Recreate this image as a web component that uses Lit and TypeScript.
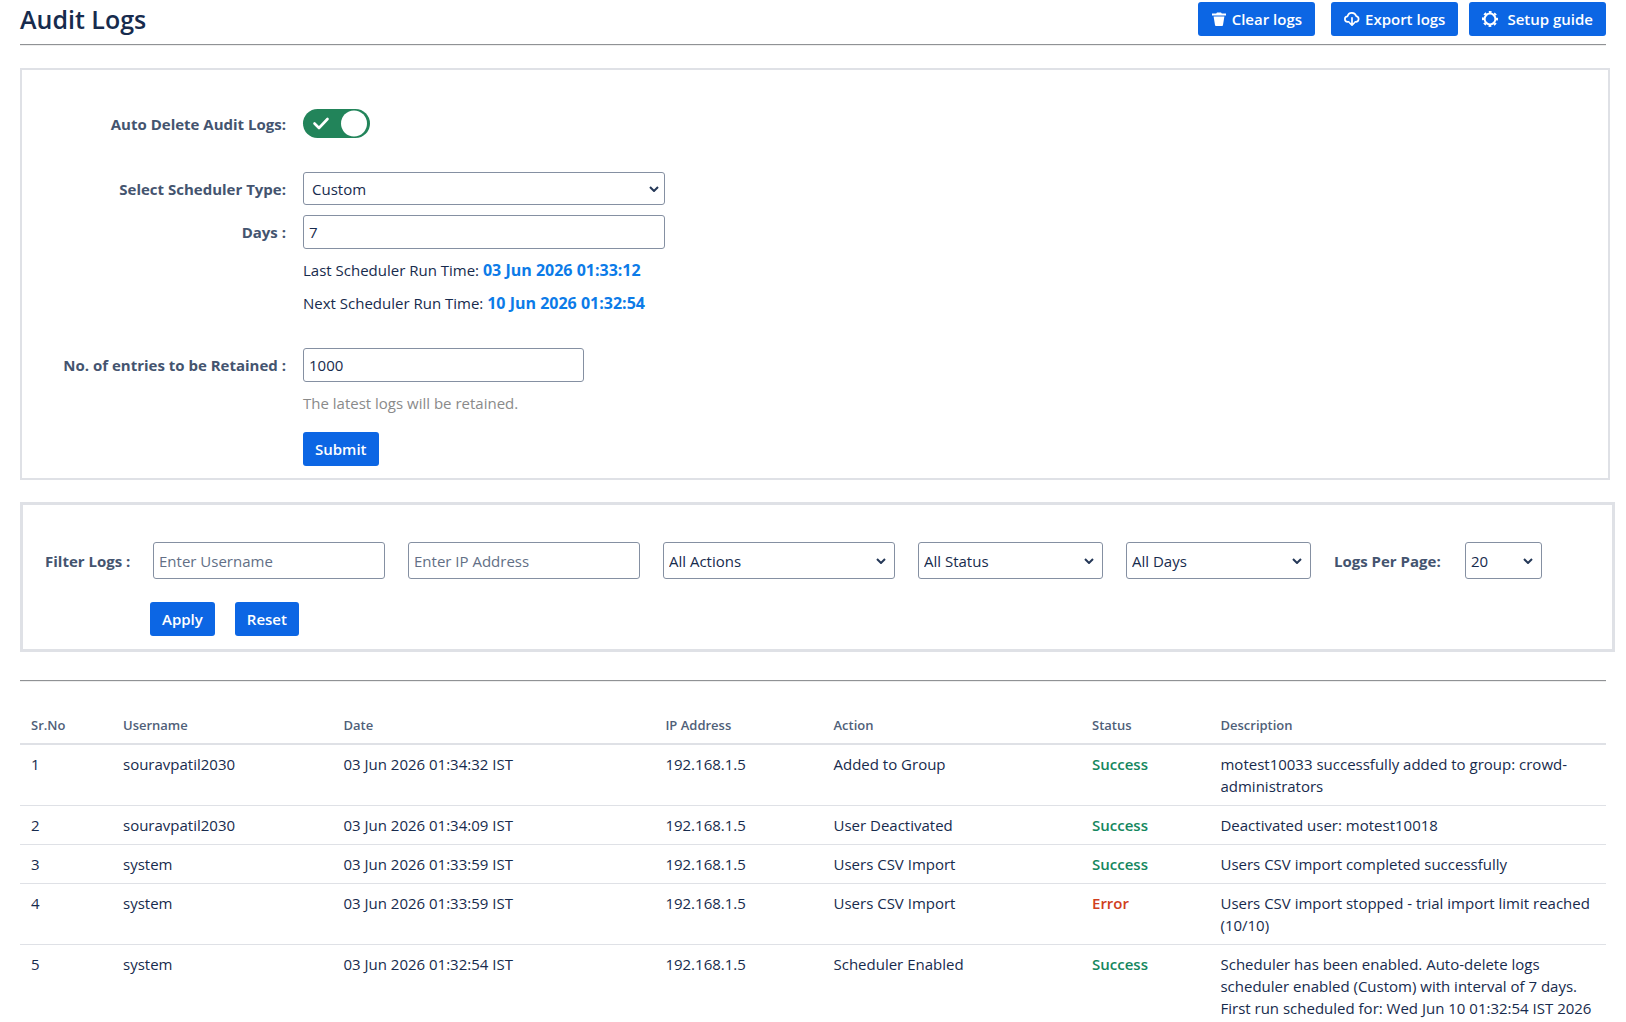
import { LitElement, html, css, svg } from "lit";
import { customElement, property } from "lit/decorators.js";

interface LogEntry {
  user: string;
  date: string;
  ip: string;
  action: string;
  status: "Success" | "Error";
  description: string;
}

const LOGS: LogEntry[] = [
  { user: "souravpatil2030", date: "03 Jun 2026 01:34:32 IST", ip: "192.168.1.5", action: "Added to Group", status: "Success", description: "motest10033 successfully added to group: crowd-administrators" },
  { user: "souravpatil2030", date: "03 Jun 2026 01:34:09 IST", ip: "192.168.1.5", action: "User Deactivated", status: "Success", description: "Deactivated user: motest10018" },
  { user: "system", date: "03 Jun 2026 01:33:59 IST", ip: "192.168.1.5", action: "Users CSV Import", status: "Success", description: "Users CSV import completed successfully" },
  { user: "system", date: "03 Jun 2026 01:33:59 IST", ip: "192.168.1.5", action: "Users CSV Import", status: "Error", description: "Users CSV import stopped - trial import limit reached (10/10)" },
  { user: "system", date: "03 Jun 2026 01:32:54 IST", ip: "192.168.1.5", action: "Scheduler Enabled", status: "Success", description: "Scheduler has been enabled. Auto-delete logs scheduler enabled (Custom) with interval of 7 days. First run scheduled for: Wed Jun 10 01:32:54 IST 2026" },
];

const trashIcon = svg`<path fill="currentColor" d="M6 1.500h4l.8.900H15v2.200H1V2.400h4.200zM2.600 5.400h10.800L12 14c-.1.700-.6 1-1.200 1H5.200c-.6 0-1.100-.3-1.200-1z"/>`;
const cloudIcon = svg`<path fill="none" stroke="currentColor" stroke-width="1.700" stroke-linecap="round" stroke-linejoin="round" d="M4.800 10.800H3.700a2.700 2.700 0 0 1-.2-5.400A4.500 4.500 0 0 1 12.200 5.100a2.900 2.900 0 0 1 .1 5.700h-1.100M8 6.800v7M5.800 12l2.200 2.200 2.200-2.200"/>`;
const gearIcon = svg`<circle cx="8" cy="8" r="5.400" fill="none" stroke="currentColor" stroke-width="2"/>
  <circle cx="8" cy="8" r="7" fill="none" stroke="currentColor" stroke-width="2" stroke-dasharray="2.749 2.749" stroke-dashoffset="1.374"/>`;

@customElement("log-table")
export class LogTable extends LitElement {
  @property({ attribute: false }) logs: LogEntry[] = [];

  static styles = css`
    :host { display: block; }
    .table { width: 100%; border-collapse: collapse; table-layout: fixed; }
    .head, .cell { padding: 8px 0 8px 11px; text-align: left; vertical-align: top; }
    .head { font-size: 13px; line-height: 20px; font-weight: 600; color: #505f79; border-bottom: 2px solid #dfe1e6; }
    .cell { line-height: 22px; border-bottom: 1px solid #dfe1e6; }
    .wide { padding-right: 11px; }
    .c-no { width: 5.8%; }
    .c-user { width: 13.9%; }
    .c-date { width: 20.3%; }
    .c-ip { width: 10.6%; }
    .c-action { width: 16.3%; }
    .c-status { width: 8.1%; }
    .success, .error { font-weight: 600; }
    .success { color: #14875e; }
    .error { color: #d04020; }
  `;

  render() {
    return html`
      <table class="table">
        <colgroup>
          <col class="c-no" /><col class="c-user" /><col class="c-date" /><col class="c-ip" />
          <col class="c-action" /><col class="c-status" /><col />
        </colgroup>
        <thead>
          <tr>
            ${["Sr.No", "Username", "Date", "IP Address", "Action", "Status", "Description"].map(
              (h) => html`<th class="head" scope="col">${h}</th>`
            )}
          </tr>
        </thead>
        <tbody>
          ${this.logs.map(
            (l, i) => html`<tr>
              <td class="cell">${i + 1}</td>
              <td class="cell">${l.user}</td>
              <td class="cell">${l.date}</td>
              <td class="cell">${l.ip}</td>
              <td class="cell">${l.action}</td>
              <td class="cell"><span class=${l.status === "Success" ? "success" : "error"}>${l.status}</span></td>
              <td class="cell wide">${l.description}</td>
            </tr>`
          )}
        </tbody>
      </table>
    `;
  }
}

@customElement("app-root")
export class AppRoot extends LitElement {
  static styles = css`
    :host {
      display: block;
      padding: 2px 20px 0;
      background: #fff;
      color: #172b4d;
      font: 15px/22px "Open Sans", "Noto Sans", sans-serif;
    }
    * { box-sizing: border-box; }
    .header { display: flex; align-items: center; padding-bottom: 8px; }
    .title { margin: 0; flex: 1; font-size: 25px; line-height: 34px; font-weight: 600; }
    .actions { display: flex; gap: 16px; }
    .actions .btn { padding: 0 13px; }
    .rule { margin: 0; border: solid; border-width: 1px 0; border-color: #909295 transparent #eeeeee; }
    .btn {
      display: inline-flex; align-items: center; gap: 5px;
      height: 34px; padding: 0 12px; border: 0; border-radius: 3px;
      background: #0c66e4; color: #fff; font: inherit; font-weight: 600;
    }
    .btn.roomy { gap: 9px; margin-left: -5px; }
    .icon { width: 16px; height: 16px; }

    .panel { border: 2px solid #dfe1e6; }
    .scheduler { margin: 22px -4px 0 0; padding: 39px 22px 12px; }
    .row { display: grid; grid-template-columns: 242px minmax(0, 1fr); column-gap: 17px; align-items: center; }
    .row + .row { margin-top: 10px; }
    .row.spaced { margin-top: 34px; }
    .row.submit { margin-top: 18px; }
    .label { font-weight: 700; color: #44546f; text-align: right; }
    .field {
      height: 34px; padding: 0 5px; border: 1px solid #8590a2; border-radius: 3px;
      background: #fff; color: #172b4d; font: inherit;
    }
    .field::placeholder { color: #626f86; opacity: 1; }
    .select { display: grid; align-items: center; }
    .select .field { grid-area: 1 / 1; width: 100%; appearance: none; }
    .chevron { grid-area: 1 / 1; justify-self: end; width: 10px; height: 6px; margin-right: 9px; pointer-events: none; }
    .row .select .field { height: 33px; padding: 0 8px; }
    .row .chevron { margin-right: 6px; }
    .long { width: 362px; }
    .medium { width: 281px; }
    .notes { display: grid; gap: 11px; font-weight: 500; }
    .note { margin: 0; }
    .time { color: #0c7be8; font-weight: 700; font-size: 16px; }
    .hint { margin: 0; color: #8a8a8a; }

    .switch { display: block; position: relative; width: 67px; height: 29px; }
    .switch-input { appearance: none; display: block; margin: 0; width: 100%; height: 100%; border-radius: 15px; background: #22845a; }
    .switch-input:not(:checked) { background: #626f86; }
    .switch-art { position: absolute; inset: 0; pointer-events: none; }

    .filters { margin: 22px -9px 0 0; padding: 37px 22px 13px; border-width: 3px; }
    .filter-row { display: flex; flex-wrap: wrap; align-items: center; gap: 23px; }
    .filter-row .field { height: 37px; }
    .f-label { width: 85px; text-align: left; white-space: nowrap; }
    .p-label { width: 108px; text-align: left; white-space: nowrap; }
    .w-lg { width: 232px; }
    .w-md { width: 185px; }
    .w-sm { width: 77px; }
    .filter-actions { display: flex; gap: 20px; margin: 23px 0 0 105px; }
    .second { margin: 28px 0 25px; }
  `;

  render() {
    const icon = (art: unknown) => html`<svg class="icon" viewBox="0 0 16 16" aria-hidden="true">${art}</svg>`;
    const chevron = html`<svg class="chevron" viewBox="0 0 10 6" aria-hidden="true">
      <path d="M1 1l4 4 4-4" fill="none" stroke="#253858" stroke-width="2" />
    </svg>`;
    return html`
      <header class="header">
        <h1 class="title">Audit Logs</h1>
        <div class="actions">
          <button class="btn" type="button">${icon(trashIcon)}Clear logs</button>
          <button class="btn" type="button">${icon(cloudIcon)}Export logs</button>
          <button class="btn roomy" type="button">${icon(gearIcon)}Setup guide</button>
        </div>
      </header>
      <hr class="rule" />

      <form class="panel scheduler" @submit=${(e: Event) => e.preventDefault()}>
        <div class="row">
          <label class="label" for="auto">Auto Delete Audit Logs:</label>
          <span class="switch">
            <input class="switch-input" id="auto" type="checkbox" role="switch" checked />
            <svg class="switch-art" viewBox="0 0 67 29" aria-hidden="true">
              <circle cx="51" cy="14.500" r="13" fill="#fff" />
              <path d="M11.500 14.500l4.500 4.500 8.500-9" fill="none" stroke="#fff" stroke-width="2.600" stroke-linecap="round" stroke-linejoin="round" />
            </svg>
          </span>
        </div>
        <div class="row spaced">
          <label class="label" for="type">Select Scheduler Type:</label>
          <span class="select long"><select class="field" id="type"><option>Custom</option></select>${chevron}</span>
        </div>
        <div class="row">
          <label class="label" for="days">Days :</label>
          <input class="field long" id="days" type="text" value="7" />
        </div>
        <div class="row">
          <span></span>
          <div class="notes">
            <p class="note">Last Scheduler Run Time: <span class="time">03 Jun 2026 01:33:12</span></p>
            <p class="note">Next Scheduler Run Time: <span class="time">10 Jun 2026 01:32:54</span></p>
          </div>
        </div>
        <div class="row spaced">
          <label class="label" for="entries">No. of entries to be Retained :</label>
          <input class="field medium" id="entries" type="text" value="1000" />
        </div>
        <div class="row">
          <span></span>
          <p class="hint">The latest logs will be retained.</p>
        </div>
        <div class="row submit">
          <span></span>
          <div><button class="btn" type="submit">Submit</button></div>
        </div>
      </form>

      <form class="panel filters" @submit=${(e: Event) => e.preventDefault()}>
        <div class="filter-row">
          <label class="label f-label" for="user">Filter Logs :</label>
          <input class="field w-lg" id="user" type="text" placeholder="Enter Username" />
          <input class="field w-lg" type="text" placeholder="Enter IP Address" aria-label="IP Address" />
          <span class="select w-lg"><select class="field" aria-label="Action"><option>All Actions</option></select>${chevron}</span>
          <span class="select w-md"><select class="field" aria-label="Status"><option>All Status</option></select>${chevron}</span>
          <span class="select w-md"><select class="field" aria-label="Days"><option>All Days</option></select>${chevron}</span>
          <label class="label p-label" for="size">Logs Per Page:</label>
          <span class="select w-sm"><select class="field" id="size"><option>20</option></select>${chevron}</span>
        </div>
        <div class="filter-actions">
          <button class="btn" type="submit">Apply</button>
          <button class="btn" type="reset">Reset</button>
        </div>
      </form>

      <hr class="rule second" />
      <log-table .logs=${LOGS}></log-table>
    `;
  }
}
